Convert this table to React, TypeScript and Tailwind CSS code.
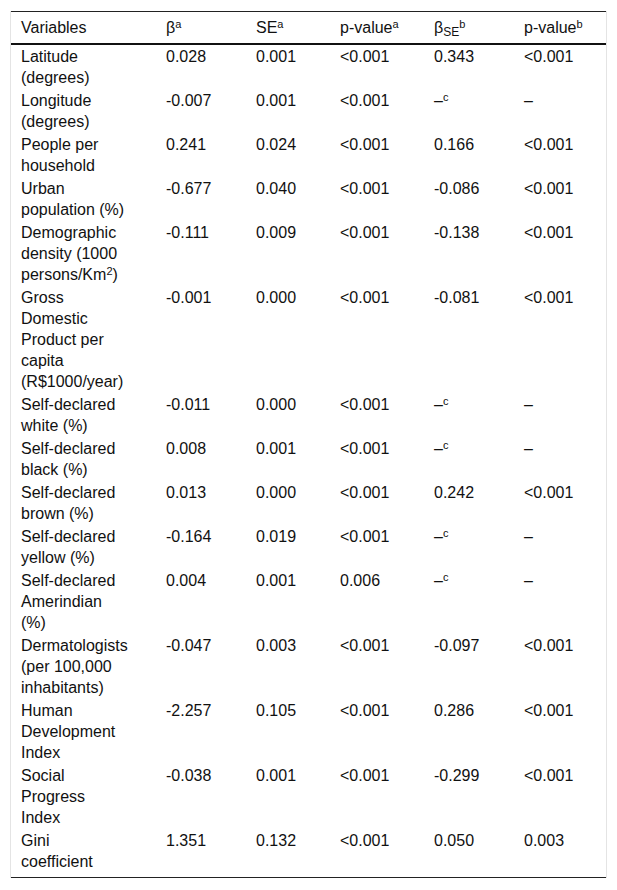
import React from "react";

type Row = {
  name: React.ReactNode;
  beta: string;
  se: string;
  p: string;
  betaSe: React.ReactNode;
  p2: string;
};

const dashC = (
  <>
    –<sup className="text-[11px]">c</sup>
  </>
);

const rows: Row[] = [
  { name: "Latitude (degrees)", beta: "0.028", se: "0.001", p: "<0.001", betaSe: "0.343", p2: "<0.001" },
  { name: "Longitude (degrees)", beta: "-0.007", se: "0.001", p: "<0.001", betaSe: dashC, p2: "–" },
  { name: "People per household", beta: "0.241", se: "0.024", p: "<0.001", betaSe: "0.166", p2: "<0.001" },
  { name: "Urban population (%)", beta: "-0.677", se: "0.040", p: "<0.001", betaSe: "-0.086", p2: "<0.001" },
  {
    name: (
      <>
        Demographic density (1000 persons/Km<sup className="text-[11px]">2</sup>)
      </>
    ),
    beta: "-0.111",
    se: "0.009",
    p: "<0.001",
    betaSe: "-0.138",
    p2: "<0.001",
  },
  { name: "Gross Domestic Product per capita (R$1000/year)", beta: "-0.001", se: "0.000", p: "<0.001", betaSe: "-0.081", p2: "<0.001" },
  { name: "Self-declared white (%)", beta: "-0.011", se: "0.000", p: "<0.001", betaSe: dashC, p2: "–" },
  { name: "Self-declared black (%)", beta: "0.008", se: "0.001", p: "<0.001", betaSe: dashC, p2: "–" },
  { name: "Self-declared brown (%)", beta: "0.013", se: "0.000", p: "<0.001", betaSe: "0.242", p2: "<0.001" },
  { name: "Self-declared yellow (%)", beta: "-0.164", se: "0.019", p: "<0.001", betaSe: dashC, p2: "–" },
  { name: "Self-declared Amerindian (%)", beta: "0.004", se: "0.001", p: "0.006", betaSe: dashC, p2: "–" },
  { name: "Dermatologists (per 100,000 inhabitants)", beta: "-0.047", se: "0.003", p: "<0.001", betaSe: "-0.097", p2: "<0.001" },
  { name: "Human Development Index", beta: "-2.257", se: "0.105", p: "<0.001", betaSe: "0.286", p2: "<0.001" },
  { name: "Social Progress Index", beta: "-0.038", se: "0.001", p: "<0.001", betaSe: "-0.299", p2: "<0.001" },
  { name: "Gini coefficient", beta: "1.351", se: "0.132", p: "<0.001", betaSe: "0.050", p2: "0.003" },
];

export default function App() {
  return (
    <div className="min-h-[890px] bg-white px-[10px] pt-[11px] font-['Liberation_Sans',Arial,sans-serif] text-[16px] leading-[21px] text-[#111]">
      <div className="border-x border-[#e4e4e4]">
        <table className="w-[595px] table-fixed border-collapse text-left">
          <colgroup>
            <col className="w-[145px]" />
            <col className="w-[90px]" />
            <col className="w-[84px]" />
            <col className="w-[94px]" />
            <col className="w-[90px]" />
            <col className="w-[92px]" />
          </colgroup>
          <thead>
            <tr className="border-t border-b-2 border-t-[#222] border-b-[#111]">
              <th className="pl-[10px] pr-[31px] py-[5px] font-normal">Variables</th>
              <th className="pl-[10px] py-[5px] font-normal">
                β<sup className="text-[11px]">a</sup>
              </th>
              <th className="pl-[10px] py-[5px] font-normal">
                SE<sup className="text-[11px]">a</sup>
              </th>
              <th className="pl-[10px] py-[5px] font-normal">
                p-value<sup className="text-[11px]">a</sup>
              </th>
              <th className="pl-[10px] py-[5px] font-normal">
                β<sub className="text-[12px]">SE</sub>
                <sup className="text-[11px]">b</sup>
              </th>
              <th className="pl-[10px] py-[5px] font-normal">
                p-value<sup className="text-[11px]">b</sup>
              </th>
            </tr>
          </thead>
          <tbody className="border-b border-[#222]">
            {rows.map((r, i) => (
              <tr key={i} className="align-top">
                <td className={`pl-[10px] pr-[31px] pt-px ${i === rows.length - 1 ? "pb-[5px]" : "pb-px"}`}>{r.name}</td>
                <td className="pl-[10px] pt-px">{r.beta}</td>
                <td className="pl-[10px] pt-px">{r.se}</td>
                <td className="pl-[10px] pt-px">{r.p}</td>
                <td className="pl-[10px] pt-px">{r.betaSe}</td>
                <td className="pl-[10px] pt-px">{r.p2}</td>
              </tr>
            ))}
          </tbody>
        </table>
      </div>
    </div>
  );
}
